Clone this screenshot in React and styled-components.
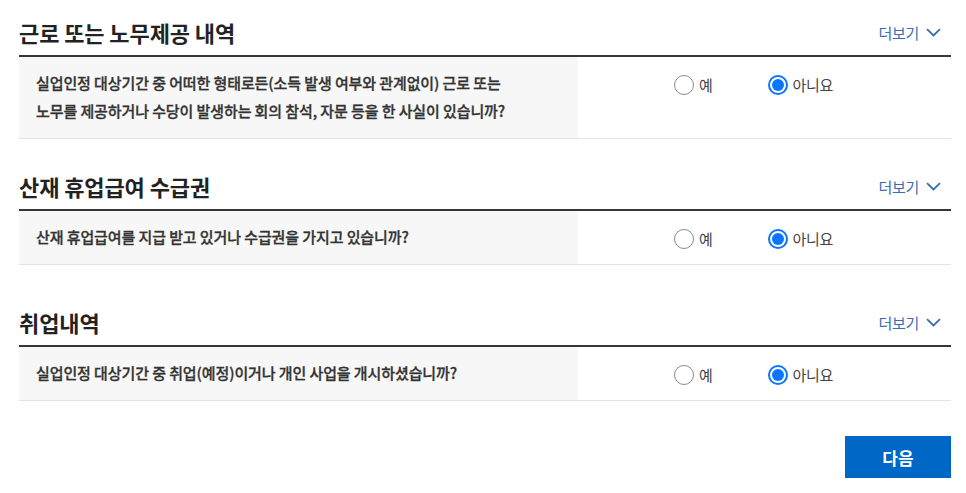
import React, { useState } from "react";
import styled, { createGlobalStyle } from "styled-components";

const Global = createGlobalStyle`
  html, body { margin: 0; padding: 0; background: #fff; }
  body { font-family: "Noto Sans CJK KR", "Noto Sans", sans-serif; color: #333; }
`;

const Page = styled.div`
  width: 932px;
  padding: 9px 15px 0 19px;
`;

const Section = styled.section`
  margin-top: ${(p) => p.$gap || 0}px;
`;

const Header = styled.div`
  display: flex;
  align-items: center;
  justify-content: space-between;
  box-sizing: border-box;
  height: 48px;
  border-bottom: 2px solid #363636;
`;

const Title = styled.h2`
  margin: 0;
  font-size: 22px;
  font-weight: 700;
  color: #222;
  letter-spacing: -0.1px;
`;

const More = styled.button`
  display: flex;
  align-items: center;
  gap: 7px;
  border: none;
  background: none;
  padding: 0 10px 0 0;
  font-family: inherit;
  font-size: 15px;
  color: #3a6bb5;
  letter-spacing: -0.3px;
  cursor: pointer;
`;

const Row = styled.div`
  display: flex;
  border-bottom: 1px solid #e3e3e3;
`;

const Question = styled.div`
  width: 559px;
  box-sizing: border-box;
  background: #f7f7f7;
  padding: 12px 17px 13px;
  font-size: 15px;
  font-weight: 500;
  line-height: 28px;
  color: #333;
  letter-spacing: -0.1px;
  -webkit-text-stroke: 0.3px #333;
`;

const Answer = styled.div`
  flex: 1;
  display: flex;
  align-items: flex-start;
  gap: 55px;
  padding: 14px 0 0 96px;
`;

const Option = styled.label`
  display: flex;
  align-items: center;
  gap: 5px;
  font-size: 15px;
  line-height: 28px;
  color: #444;
  cursor: pointer;
  letter-spacing: -0.3px;
`;

const Dot = styled.span`
  width: 20px;
  height: 20px;
  box-sizing: border-box;
  border-radius: 50%;
  border: ${(p) => (p.$on ? "2px solid #0a75ff" : "1.5px solid #8a8a8a")};
  background: #fff;
  display: flex;
  align-items: center;
  justify-content: center;
  &::after {
    content: "";
    width: 12px;
    height: 12px;
    border-radius: 50%;
    background: ${(p) => (p.$on ? "#0a75ff" : "transparent")};
  }
`;

const HiddenInput = styled.input`
  display: none;
`;

const Footer = styled.div`
  display: flex;
  justify-content: flex-end;
  margin-top: 35px;
`;

const NextButton = styled.button`
  width: 106px;
  height: 42px;
  border: none;
  background: #0067c7;
  color: #fff;
  font-family: inherit;
  font-size: 17px;
  font-weight: 700;
  cursor: pointer;
`;

const Chevron = () => (
  <svg width="15" height="9" viewBox="0 0 15 9" fill="none">
    <path d="M1 1.2 L7.5 7.4 L14 1.2" stroke="#3a6bb5" strokeWidth="1.8" />
  </svg>
);

const sections = [
  {
    id: "work",
    title: "근로 또는 노무제공 내역",
    gap: 0,
    q: [
      "실업인정 대상기간 중 어떠한 형태로든(소득 발생 여부와 관계없이) 근로 또는",
      "노무를 제공하거나 수당이 발생하는 회의 참석, 자문 등을 한 사실이 있습니까?",
    ],
  },
  {
    id: "injury",
    title: "산재 휴업급여 수급권",
    gap: 24,
    q: ["산재 휴업급여를 지급 받고 있거나 수급권을 가지고 있습니까?"],
  },
  {
    id: "job",
    title: "취업내역",
    gap: 34,
    q: ["실업인정 대상기간 중 취업(예정)이거나 개인 사업을 개시하셨습니까?"],
  },
];

function RadioGroup({ name, value, onChange }) {
  return (
    <Answer>
      {[
        ["Y", "예"],
        ["N", "아니요"],
      ].map(([v, label]) => (
        <Option key={v}>
          <HiddenInput
            type="radio"
            name={name}
            checked={value === v}
            onChange={() => onChange(v)}
          />
          <Dot $on={value === v} />
          {label}
        </Option>
      ))}
    </Answer>
  );
}

export default function App() {
  const [vals, setVals] = useState({ work: "N", injury: "N", job: "N" });
  return (
    <Page>
      <Global />
      {sections.map((s) => (
        <Section key={s.id} $gap={s.gap}>
          <Header>
            <Title>{s.title}</Title>
            <More>
              더보기 <Chevron />
            </More>
          </Header>
          <Row>
            <Question>
              {s.q.map((line, i) => (
                <div key={i}>{line}</div>
              ))}
            </Question>
            <RadioGroup
              name={s.id}
              value={vals[s.id]}
              onChange={(v) => setVals({ ...vals, [s.id]: v })}
            />
          </Row>
        </Section>
      ))}
      <Footer>
        <NextButton>다음</NextButton>
      </Footer>
    </Page>
  );
}
